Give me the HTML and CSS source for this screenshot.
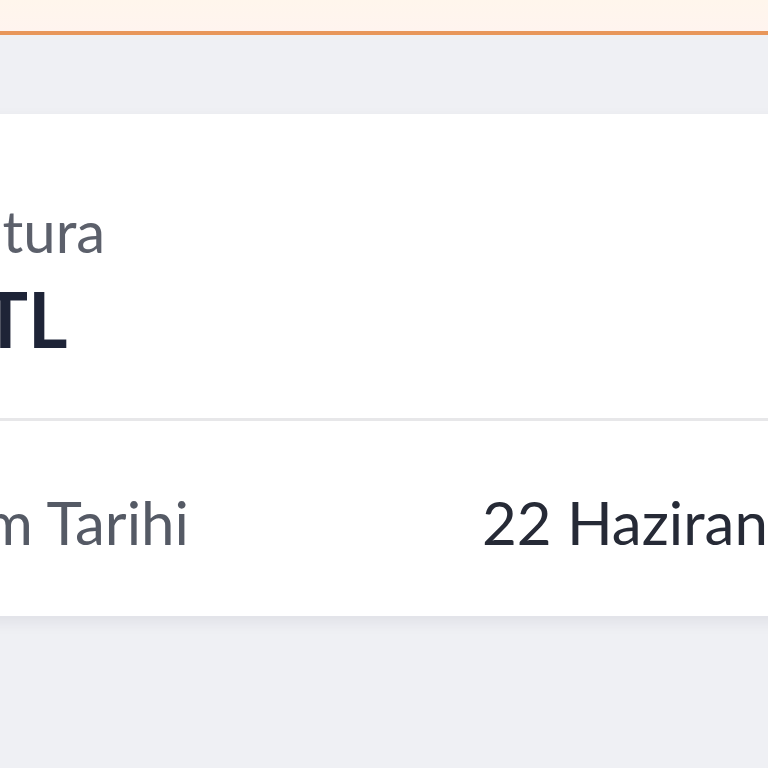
FILE: index.html
```html
<!DOCTYPE html>
<html lang="tr">
<head>
<meta charset="utf-8">
<link rel="stylesheet" href="styles.css">
</head>
<body>
<div class="page">
  <div class="topbar"></div>
  <div class="content">
    <div class="card">
      <div class="summary">
        <div class="label">Son Fatura</div>
        <div class="amount">250 TL</div>
      </div>
      <div class="divider"></div>
      <div class="row">
        <div class="row-label">Kesim Tarihi</div>
        <div class="row-value">22 Haziran 2024</div>
      </div>
    </div>
  </div>
</div>
</body>
</html>
```
FILE: styles.css
```css
html, body {
  margin: 0;
  padding: 0;
}
body {
  font-family: Lato, "Noto Sans", sans-serif;
  background: #eff0f4;
}
.page {
  width: 768px;
  height: 768px;
  overflow: hidden;
  background: #eff0f4;
}
.topbar {
  height: 31px;
  background: linear-gradient(#fff6ec, #fff4ef);
  border-bottom: 4px solid #e8965a;
}
.content {
  padding-top: 79px;
}
.card {
  background: #ffffff;
  margin-left: -400px;
  width: 1600px;
  box-shadow: 0 6px 14px rgba(30, 35, 60, 0.07);
}
.summary {
  padding: 82px 0 54px 234px;
  display: flex;
  flex-direction: column;
  align-items: flex-start;
  gap: 7px;
}
.label {
  font-size: 58px;
  line-height: 1.2;
  color: #5c606b;
}
.amount {
  font-size: 76px;
  line-height: 1.2;
  font-weight: 700;
  color: #1e2437;
}
.divider {
  height: 3px;
  background: #e7e7e9;
}
.row {
  display: flex;
  align-items: center;
  padding: 65px 0 58px 274px;
  gap: 0;
}
.row-label {
  font-size: 60px;
  line-height: 1.2;
  color: #555a65;
  width: 608px;
}
.row-value {
  font-size: 60px;
  line-height: 1.2;
  color: #262a36;
  white-space: nowrap;
}
```
